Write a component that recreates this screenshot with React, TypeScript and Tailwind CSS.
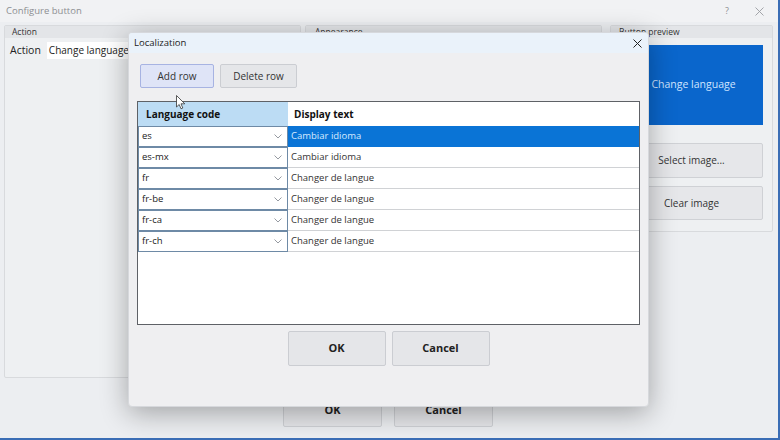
import React from "react";

const font = { fontFamily: '"Open Sans", "Noto Sans", sans-serif' };

function Chevron() {
  return (
    <svg width="8" height="5" viewBox="0 0 8 5" className="shrink-0">
      <path d="M0.5 0.5 L4 4 L7.5 0.5" fill="none" stroke="#8a8f96" strokeWidth="0.9" />
    </svg>
  );
}

const rows = [
  { code: "es", text: "Cambiar idioma", sel: true },
  { code: "es-mx", text: "Cambiar idioma" },
  { code: "fr", text: "Changer de langue" },
  { code: "fr-be", text: "Changer de langue" },
  { code: "fr-ca", text: "Changer de langue" },
  { code: "fr-ch", text: "Changer de langue" },
];

export default function App() {
  return (
    <div
      className="relative w-[780px] h-[440px] overflow-hidden bg-[#eceef1] border-r-[2px] border-b-[2px] border-[#3a6db5] flex flex-col"
      style={font}
    >
      {/* title bar */}
      <div className="h-[22px] flex items-center pl-[6px] pr-[14px] bg-[#f1f2f4] text-[9.5px] text-[#8d8f93]">
        <span className="flex-1">Configure button</span>
        <span className="mr-[26px] text-[9px]">?</span>
        <svg width="9" height="9" viewBox="0 0 9 9">
          <path d="M0.5 0.5 L8.5 8.5 M8.5 0.5 L0.5 8.5" stroke="#9a9ca0" strokeWidth="0.9" />
        </svg>
      </div>

      {/* content */}
      <div className="flex items-start gap-[4px] pl-[4px] pt-[3px]">
        <div className="w-[297px] h-[353px] border border-[#d8dadd] rounded-[2px] bg-[#eef0f2] flex flex-col">
          <div className="h-[12px] bg-[#e3e5e8] flex items-center pl-[7px] text-[8.5px] text-[#333]">Action</div>
          <div className="flex items-center pl-[5px] pt-[4px] gap-[6px]">
            <span className="text-[10.5px] text-[#222]">Action</span>
            <div className="h-[17px] w-[200px] bg-white flex items-center pl-[2px] text-[10px] text-[#222]">
              Change language
            </div>
          </div>
        </div>
        <div className="w-[297px] h-[353px] border border-[#d8dadd] rounded-[2px] bg-[#eef0f2] flex flex-col">
          <div className="h-[12px] bg-[#e3e5e8] flex items-center pl-[9px] text-[8.5px] text-[#333]">Appearance</div>
        </div>
        <div className="ml-[4px] w-[163px] h-[207px] border border-[#d8dadd] rounded-[2px] bg-[#eef0f2] flex flex-col">
          <div className="h-[12px] bg-[#e3e5e8] flex items-center pl-[8px] text-[8.5px] text-[#333]">Button preview</div>
          <div className="mx-[9px] mt-[7px] h-[80px] bg-[#0a66cc] flex items-center justify-center pl-[4px] text-[10.5px] text-[#cfe4ff]">
            Change language
          </div>
          <div className="mx-[9px] mt-[18px] h-[35px] rounded-[2px] border border-[#cfd1d5] bg-[#e6e7ea] flex items-center justify-center text-[10px] text-[#333]">
            Select image...
          </div>
          <div className="mx-[9px] mt-[8px] h-[34px] rounded-[2px] border border-[#cfd1d5] bg-[#e6e7ea] flex items-center justify-center text-[10px] text-[#333]">
            Clear image
          </div>
        </div>
      </div>

      {/* parent bottom buttons */}
      <div className="flex gap-[12px] pl-[283px] mt-[15px]">
        <div className="w-[99px] h-[34px] rounded-[2px] border border-[#cfd1d5] bg-[#e6e7ea] flex items-center justify-center text-[11px] font-bold text-[#222]">OK</div>
        <div className="w-[99px] h-[34px] rounded-[2px] border border-[#cfd1d5] bg-[#e6e7ea] flex items-center justify-center text-[11px] font-bold text-[#222]">Cancel</div>
      </div>

      {/* Localization dialog */}
      <div className="absolute left-[128px] top-[32px] w-[521px] h-[375px] rounded-[4px] bg-[#efeff1] border border-[#d6d8dc] shadow-[0_6px_28px_rgba(0,0,0,0.32)] flex flex-col overflow-hidden">
        <div className="h-[20px] bg-[#eaf2fa] flex items-center pl-[5px] pr-[6px] text-[9.5px] text-[#222]">
          <span className="flex-1">Localization</span>
          <svg width="9" height="9" viewBox="0 0 9 9">
            <path d="M0.5 0.5 L8.5 8.5 M8.5 0.5 L0.5 8.5" stroke="#222" strokeWidth="1" />
          </svg>
        </div>
        <div className="flex gap-[6px] pl-[11px] pt-[11px]">
          <div className="w-[74px] h-[24px] rounded-[2px] border border-[#a7b3e2] bg-[#dfe4f7] flex items-center justify-center text-[10px] text-[#333]">Add row</div>
          <div className="w-[77px] h-[24px] rounded-[2px] border border-[#cbcdd2] bg-[#e5e6e9] flex items-center justify-center text-[10px] text-[#333]">Delete row</div>
        </div>
        <div className="ml-[8px] mt-[13px] w-[503px] h-[224px] border border-[#5e6166] bg-white flex flex-col">
          <div className="h-[24px] flex text-[10px] font-bold text-[#111]">
            <div className="w-[150px] bg-[#bcdcf4] flex items-center pl-[8px]">Language code</div>
            <div className="flex-1 flex items-center pl-[6px]">Display text</div>
          </div>
          {rows.map((r) => (
            <div key={r.code} className="h-[21px] flex text-[9.5px]">
              <div className="w-[150px] border border-[#6e8aa6] bg-white flex items-center pl-[3px] pr-[5px] text-[#222]">
                <span className="flex-1">{r.code}</span>
                <Chevron />
              </div>
              <div
                className={
                  r.sel
                    ? "flex-1 bg-[#0a74d6] flex items-center pl-[3px] text-[#d6ebff] border-b border-[#0a74d6]"
                    : "flex-1 flex items-center pl-[3px] text-[#333] border-b border-[#d0d2d5]"
                }
              >
                {r.text}
              </div>
            </div>
          ))}
        </div>
        <div className="flex justify-center gap-[6px] mt-[6px]">
          <div className="w-[98px] h-[35px] rounded-[2px] border border-[#cbcdd2] bg-[#e5e6e9] flex items-center justify-center text-[11px] font-bold text-[#222]">OK</div>
          <div className="w-[98px] h-[35px] rounded-[2px] border border-[#cbcdd2] bg-[#e5e6e9] flex items-center justify-center text-[11px] font-bold text-[#222]">Cancel</div>
        </div>
      </div>

      {/* mouse cursor */}
      <svg className="absolute left-[176px] top-[95px]" width="10" height="15" viewBox="0 0 10 15">
        <path d="M0.5 0.5 L0.5 12 L3.2 9.5 L5 13.8 L6.8 13 L5 8.8 L8.8 8.8 Z" fill="#fff" stroke="#333" strokeWidth="0.8" strokeLinejoin="round" />
      </svg>
    </div>
  );
}
